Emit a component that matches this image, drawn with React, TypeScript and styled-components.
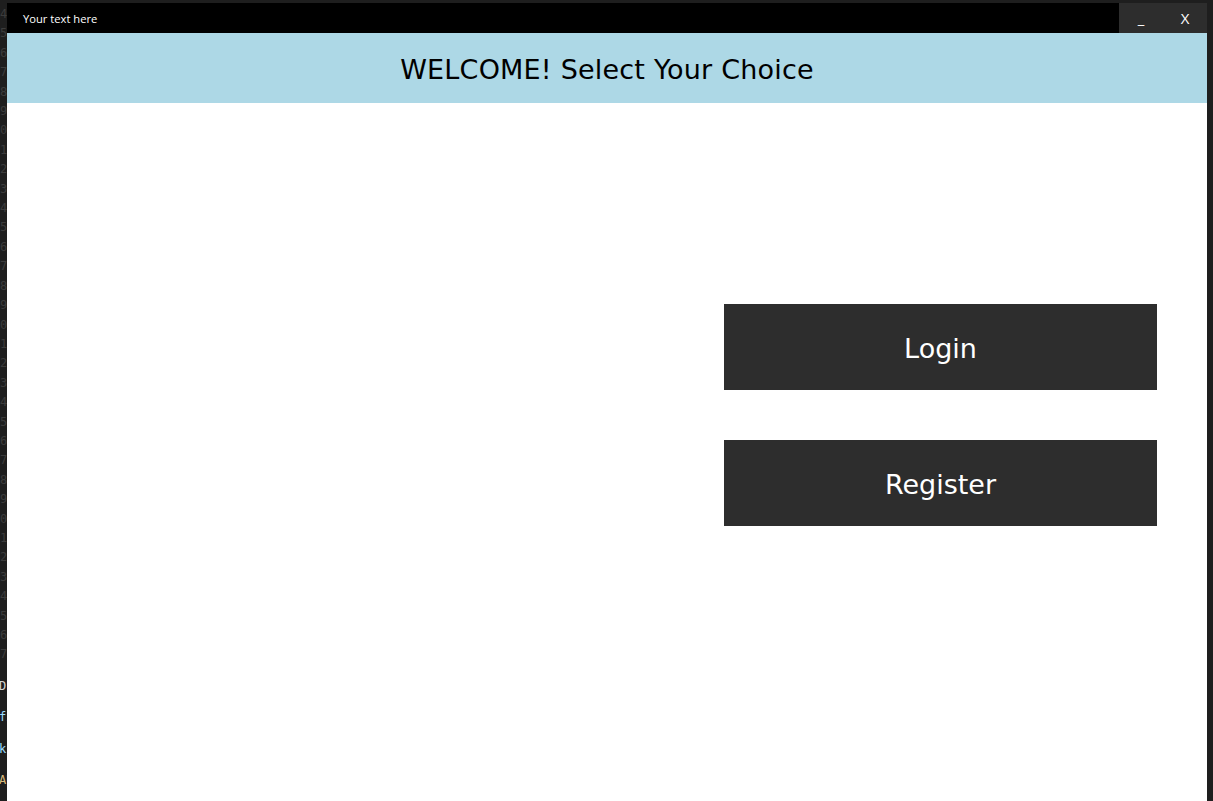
import React from "react";
import styled, { createGlobalStyle } from "styled-components";

const Global = createGlobalStyle`
  html, body { margin: 0; padding: 0; background: #1e1e1e; overflow: hidden; }
  #root { height: 801px; }
`;

const Screen = styled.div`
  display: flex;
  height: 801px;
  background: #1e1e1e;
`;

const Gutter = styled.div`
  width: 7px;
  overflow: hidden;
  display: flex;
  flex-direction: column;
  padding-top: 5px;
  font-family: "DejaVu Sans Mono", monospace;
  font-size: 12px;
  line-height: 19.4px;
  white-space: nowrap;
`;

const GutterLine = styled.span<{ $tone?: string }>`
  display: block;
  color: ${(p) => p.$tone ?? "#3c3c3c"};
`;

const GutterTail = styled.div`
  display: flex;
  flex-direction: column;
  gap: 12px;
  margin-top: 12px;
  margin-left: -1px;
`;

const Window = styled.div`
  flex: 1;
  margin: 3px 6px 0 0;
  display: flex;
  flex-direction: column;
  background: #ffffff;
`;

const TitleBar = styled.div`
  height: 30px;
  display: flex;
  align-items: center;
  background: #000000;
`;

const TitleText = styled.span`
  flex: 1;
  padding-left: 16px;
  font-family: "Open Sans", "Noto Sans", sans-serif;
  font-size: 11.2px;
  color: #ffffff;
`;

const Controls = styled.div`
  display: flex;
  height: 100%;
  background: #2d2d2d;
`;

const ControlButton = styled.button`
  width: 44px;
  height: 100%;
  border: none;
  padding: 0;
  background: transparent;
  color: #ffffff;
  font-family: "Open Sans", "Noto Sans", sans-serif;
  font-size: 15px;
  cursor: pointer;
`;

const Header = styled.header`
  height: 70px;
  display: flex;
  align-items: center;
  justify-content: center;
  padding-top: 3px;
  box-sizing: border-box;
  background: #add8e6;
  font-family: "DejaVu Sans", Verdana, sans-serif;
  font-size: 27px;
  letter-spacing: 0.2px;
  color: #000000;
`;

const Content = styled.main`
  flex: 1;
  display: flex;
  justify-content: flex-end;
  padding: 201px 50px 0 0;
`;

const ButtonColumn = styled.div`
  display: flex;
  flex-direction: column;
  gap: 50px;
  width: 433px;
`;

const ChoiceButton = styled.button`
  height: 86px;
  border: none;
  padding: 3px 0 0;
  background: #2d2d2d;
  color: #ffffff;
  font-family: "DejaVu Sans", Verdana, sans-serif;
  font-size: 27px;
  cursor: pointer;
`;

const lines = ["4", "5", "6", "7", "8", "9", "0", "1", "2", "3", "4", "5", "6", "7", "8", "9", "0", "1", "2", "3", "4", "5", "6", "7", "8", "9", "0", "1", "2", "3", "4", "5", "6", "7"];

const tail = [
  { text: "DE", tone: "#d4d4d4" },
  { text: "fi", tone: "#9cdcfe" },
  { text: "ki", tone: "#9cdcfe" },
  { text: "AU", tone: "#d7ba7d" },
];

export default function App() {
  return (
    <>
      <Global />
      <Screen>
        <Gutter>
          {lines.map((l, i) => (
            <GutterLine key={i}>{l}</GutterLine>
          ))}
          <GutterTail>
            {tail.map((t) => (
              <GutterLine key={t.text} $tone={t.tone}>
                {t.text}
              </GutterLine>
            ))}
          </GutterTail>
        </Gutter>
        <Window>
          <TitleBar>
            <TitleText>Your text here</TitleText>
            <Controls>
              <ControlButton>_</ControlButton>
              <ControlButton>X</ControlButton>
            </Controls>
          </TitleBar>
          <Header>WELCOME! Select Your Choice</Header>
          <Content>
            <ButtonColumn>
              <ChoiceButton>Login</ChoiceButton>
              <ChoiceButton>Register</ChoiceButton>
            </ButtonColumn>
          </Content>
        </Window>
      </Screen>
    </>
  );
}
